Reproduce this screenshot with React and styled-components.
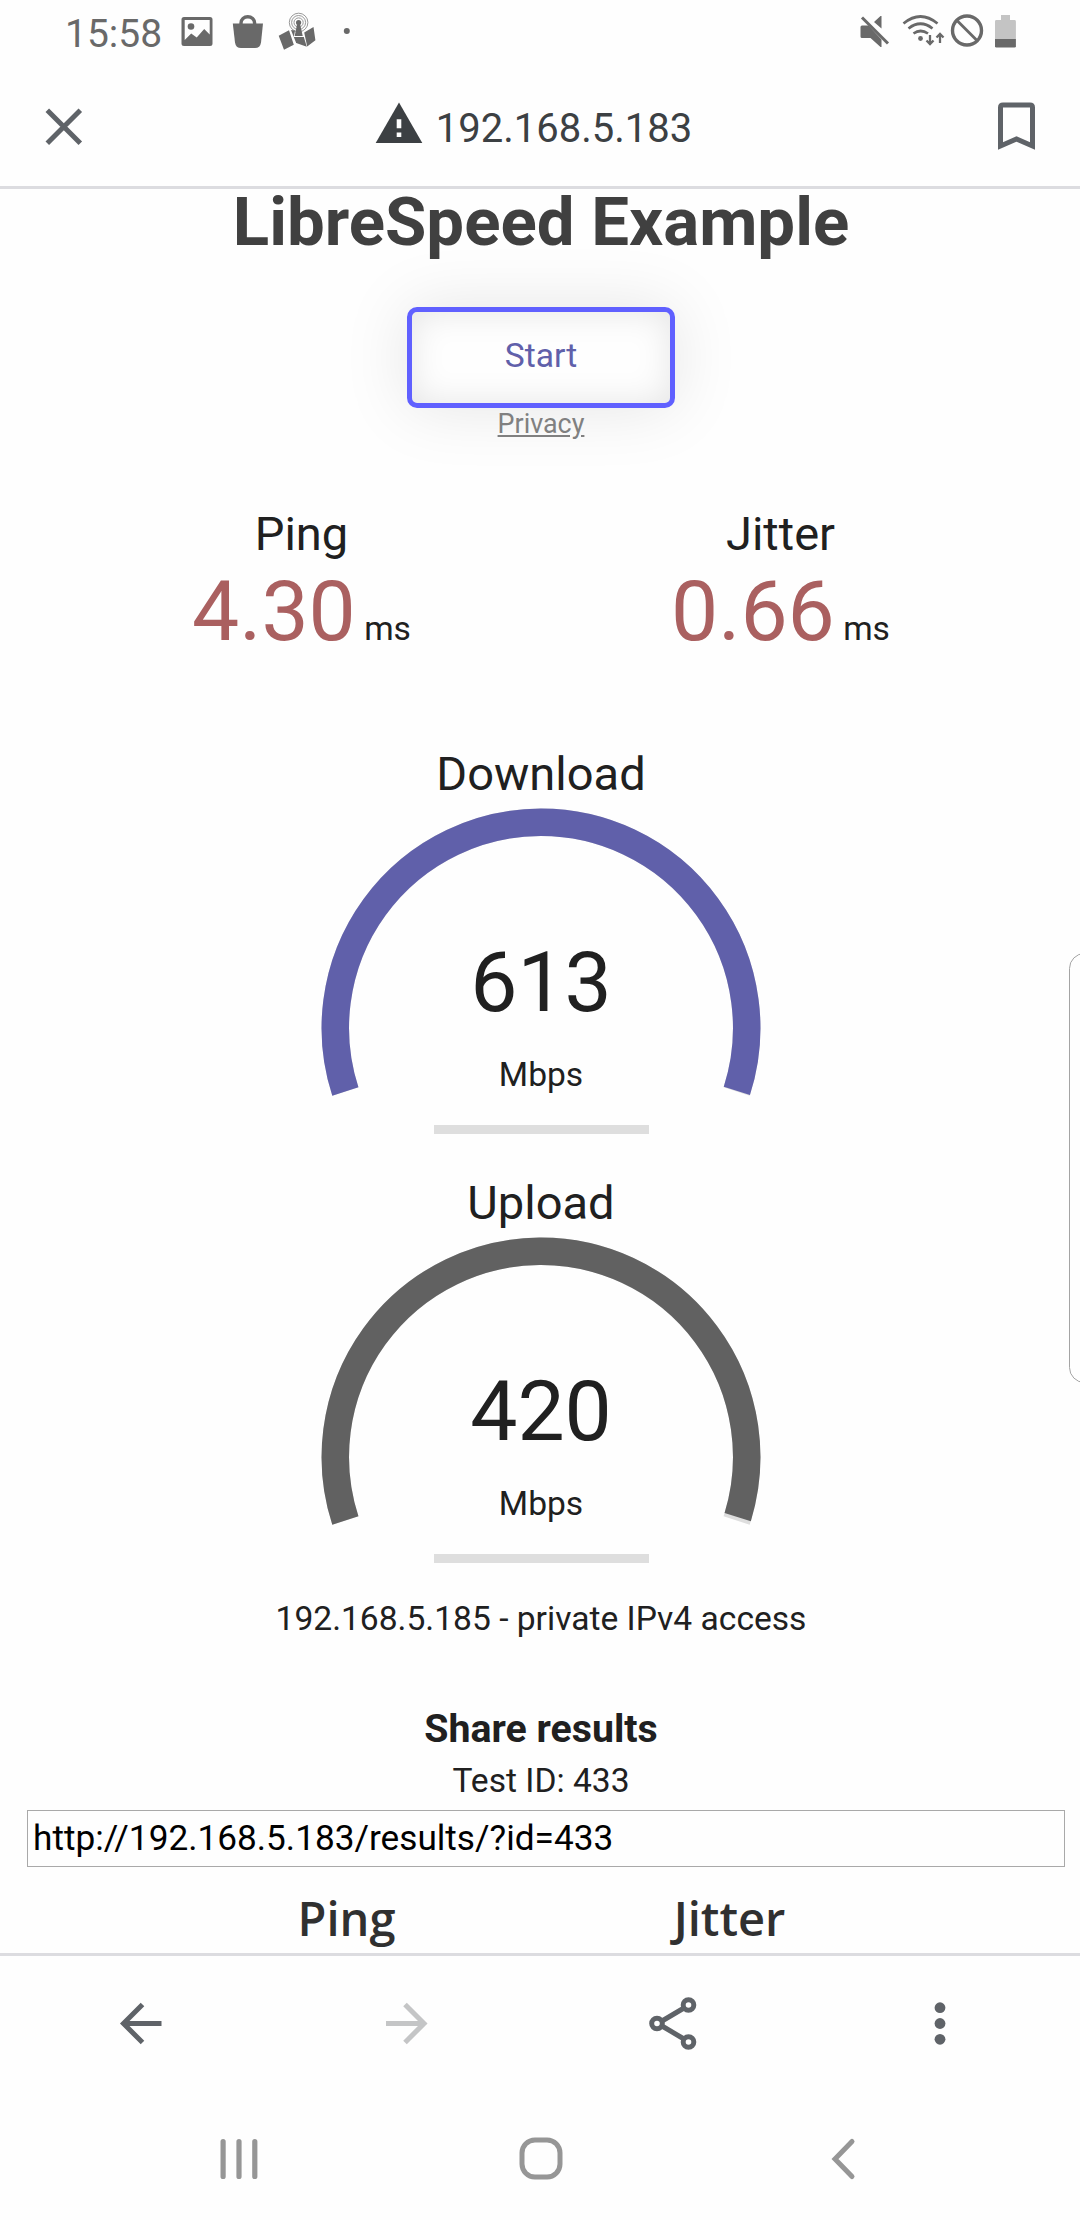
import React from 'react';
import styled, { createGlobalStyle } from 'styled-components';

const GlobalStyle = createGlobalStyle`
  * {
    box-sizing: border-box;
  }

  body {
    margin: 0;
    background: #fefefe;
    font-family: Roboto, sans-serif;
    color: #202020;
  }

  svg {
    display: block;
    flex: none;
  }
`;

const Screen = styled.div`
  position: relative;
  display: flex;
  flex-direction: column;
  width: 1080px;
  height: 2220px;
  overflow: hidden;
`;

const StatusBar = styled.header`
  display: flex;
  align-items: center;
  justify-content: space-between;
  height: 64px;
  padding: 0 63px 0 65px;
`;

const StatusGroup = styled.div`
  display: flex;
  align-items: center;
`;

const Clock = styled.span`
  width: 112px;
  font-size: 39px;
  line-height: 60px;
  padding-top: 4px;
  color: #696969;
`;

const TopBar = styled.div`
  display: flex;
  align-items: center;
  justify-content: space-between;
  height: 125px;
  padding: 0 40px;
  border-bottom: 3px solid #dcdce0;
`;

const Address = styled.div`
  display: flex;
  align-items: center;
  gap: 13px;
  margin-right: 13px;
  font-size: 40px;
  line-height: 48px;
  color: #3c4043;

  span {
    padding-top: 7px;
  }
`;

const Page = styled.main`
  display: flex;
  flex-direction: column;
  align-items: center;
  height: 1764px;
  padding-left: 2px;
  font-size: 33.6px;
  line-height: 40px;

  > * {
    flex-shrink: 0;
  }
`;

const Title = styled.h1`
  margin: 0;
  font-size: 67.2px;
  line-height: 66px;
  font-weight: 700;
  color: #404040;
`;

const StartButton = styled.button`
  width: 268px;
  height: 101px;
  margin-top: 52px;
  padding: 0 0 4px;
  border: 5px solid #6060ff;
  border-radius: 10px;
  background: transparent;
  box-shadow: 0 0 67px rgba(0, 0, 0, 0.1), inset 0 0 34px rgba(0, 0, 0, 0.1);
  font: inherit;
  color: #6060aa;
`;

const Privacy = styled.a`
  font-size: 26.88px;
  line-height: 32px;
  color: #808080;
  text-decoration: underline;
`;

const LatencyRow = styled.div`
  display: flex;
  gap: 8px;
  margin-top: 66px;
`;

const LatencyCell = styled.div`
  width: 471px;
  text-align: center;
`;

const Label = styled.div`
  font-size: 47.04px;
  line-height: 56px;
`;

const Latency = styled.div`
  margin-top: 1px;

  b {
    font-size: 84px;
    line-height: 98px;
    font-weight: 400;
    color: #aa6060;
  }
`;

const Test = styled.section`
  display: flex;
  flex-direction: column;
  align-items: center;
  margin-top: ${props => props.$gap}px;
`;

const Meter = styled.div`
  display: grid;
  justify-items: center;
  height: 332px;

  > * {
    grid-area: 1 / 1;
  }
`;

const Reading = styled.div`
  display: flex;
  flex-direction: column;
  align-items: center;
  padding-top: 132px;
`;

const Speed = styled.div`
  font-size: 84px;
  line-height: 98px;
`;

const Unit = styled.div`
  margin-top: 23px;
`;

const Progress = styled.div`
  width: 215px;
  height: 9px;
  margin-top: 30px;
  background: #dedede;
`;

const ClientIp = styled.div`
  margin-top: 36px;
`;

const ShareTitle = styled.h3`
  margin: 67px 0 9px;
  font-size: 39.3px;
  line-height: 46px;
`;

const ResultUrl = styled.input`
  align-self: stretch;
  height: 57px;
  margin: 9px 15px 0 25px;
  padding: 0 5px 2px;
  border: 1px solid #a9a9a9;
  border-radius: 0;
  background: transparent;
  font: inherit;
  font-size: 35.2px;
  color: #000;
`;

const ResultCard = styled.div`
  display: grid;
  grid-template-columns: 381px 385px;
  margin: 18px 0 0 -4px;
  text-align: center;
  font: 600 47px/66px 'Open Sans', sans-serif;
  color: #303030;
`;

const ToolBar = styled.nav`
  display: flex;
  justify-content: space-between;
  height: 141px;
  padding: 32px 104px 0;
  border-top: 3px solid #dcdce0;
`;

const SystemBar = styled.nav`
  display: flex;
  justify-content: space-between;
  padding: 35px 206px 0;
`;

const EdgePanel = styled.div`
  position: absolute;
  top: 953px;
  right: -20px;
  width: 31px;
  height: 430px;
  border: 1.500px solid #a4a4a4;
  border-radius: 16px;
`;

const point = (r, deg) => {
  const a = (deg * Math.PI) / 180;
  return `${220 + r * Math.cos(a)} ${226 + r * Math.sin(a)}`;
};

const arc = end => `M${point(205.7, -198)} A205.7 205.7 0 1 1 ${point(205.7, end)}`;

const Gauge = ({ label, value, color, end, gap }) => (
  <Test $gap={gap}>
    <Label>{label}</Label>
    <Meter>
      <svg width="440" height="332" fill="none" strokeWidth="27.5">
        <path d={arc(18)} stroke="#dedede" />
        <path d={arc(end)} stroke={color} />
      </svg>
      <Reading>
        <Speed>{value}</Speed>
        <Unit>Mbps</Unit>
        <Progress />
      </Reading>
    </Meter>
  </Test>
);

const NotificationIcons = () => (
  <svg width="180" height="64" viewBox="177 0 180 64" fill="#696969">
    <path fillRule="evenodd" d="M184 17h26q2.500 0 2.500 2.500v24q0 2.500-2.500 2.500h-26q-2.500 0-2.500-2.500v-24q0-2.500 2.500-2.500zM184.700 20v20l6.500-6.500 5.500 4 7.500-8.500 5.500 5.500V20z" />
    <circle cx="191" cy="26.500" r="3.300" />
    <path d="M232.800 23.500h30.200l-2 19q-.8 5.500-6 5.500h-14q-5.200 0-6-5.500z" />
    <path d="M241 25v-2a6.800 6.300 0 0 1 13.600 0v2" fill="none" stroke="#696969" strokeWidth="3.400" />
    <path d="M278.700 35.700l10.300-5.400 4.800 14.500-9.800 5zM291 30l4 .6-1.200 6.400h10l3 9.800-10.600-3.800zM304.200 32.500l9.300-5.500 1.900 13.200-8.200 6.300z" />
    <path d="M294.700 36l2.300-11.500h3.200l2.500 11.500z" />
    <circle cx="298.600" cy="22.500" r="2.600" />
    <g fill="none" stroke="#696969" strokeWidth="0.900" opacity="0.75">
      <circle cx="298.600" cy="22.500" r="4.600" />
      <circle cx="298.600" cy="22.500" r="7" />
      <circle cx="298.600" cy="22.500" r="9.300" />
    </g>
    <circle cx="346.800" cy="31" r="3" />
  </svg>
);

const SystemIcons = () => (
  <svg width="160" height="64" viewBox="857 0 160 64" fill="#696969">
    <path d="M874 22l6.500-6h1v12.500zM862 25.500h6.500l13 14V47h-1l-10-9H862q-1.500 0-1.500-1.500V27q0-1.500 1.500-1.500z" />
    <path d="M862 17.500l26 26" stroke="#696969" strokeWidth="3" />
    <g fill="none" stroke="#696969" strokeWidth="2.700">
      <path d="M903.500 23.500q17-14 34 0M908.500 28.500q12-9.500 24 0M913.500 33.500q7-5 14.500 0" />
      <path d="M930 35v9M926.500 40.500l3.500 3.500 3.500-3.500M940 43v-9M936.500 37.500l3.500-3.500 3.500 3.500" strokeWidth="2.300" />
    </g>
    <circle cx="920.500" cy="38.500" r="2.400" />
    <g fill="none" stroke="#696969">
      <circle cx="967" cy="30.500" r="14.500" strokeWidth="3.400" />
      <path d="M957 20.500l20 20" strokeWidth="2.800" />
    </g>
    <path d="M1001 15h9v5h4.500q1.400 0 1.400 1.400V39H995V21.400q0-1.400 1.400-1.400h4.600z" fill="#c4c4c4" />
    <path d="M995 39h20.900v7.200q0 1.400-1.400 1.400h-18.100q-1.400 0-1.400-1.400z" />
  </svg>
);

const App = () => (
  <Screen>
    <GlobalStyle />
    <StatusBar>
      <StatusGroup>
        <Clock>15:58</Clock>
        <NotificationIcons />
      </StatusGroup>
      <SystemIcons />
    </StatusBar>

    <TopBar>
      <svg width="48" height="48" stroke="#5f6368" strokeWidth="5">
        <path d="M7.300 9.200l33 33M40.300 9.200l-33 33" />
      </svg>
      <Address>
        <svg width="48" height="48">
          <path d="M24 1.500L47.300 42H.7z" fill="#3c4043" />
          <path d="M21.700 18.300h4.600v9h-4.600zM21.700 31.500h4.600v4.500h-4.600z" fill="#fefefe" />
        </svg>
        <span>192.168.5.183</span>
      </Address>
      <svg width="48" height="54" fill="none" stroke="#5f6368" strokeWidth="5">
        <path d="M8.500 48V9.500q0-2.500 2.500-2.500h27q2.500 0 2.500 2.500V48l-16-7z" />
      </svg>
    </TopBar>

    <Page>
      <Title>LibreSpeed Example</Title>
      <StartButton>Start</StartButton>
      <Privacy>Privacy</Privacy>

      <LatencyRow>
        <LatencyCell>
          <Label>Ping</Label>
          <Latency><b>4.30</b> ms</Latency>
        </LatencyCell>
        <LatencyCell>
          <Label>Jitter</Label>
          <Latency><b>0.66</b> ms</Latency>
        </LatencyCell>
      </LatencyRow>

      <Gauge label="Download" value="613" color="#6060aa" end={17.8} gap={85} />
      <Gauge label="Upload" value="420" color="#616161" end={17} gap={41} />

      <ClientIp>192.168.5.185 - private IPv4 access</ClientIp>

      <ShareTitle>Share results</ShareTitle>
      <div>Test ID: 433</div>
      <ResultUrl readOnly value="http://192.168.5.183/results/?id=433" />
      <ResultCard>
        <span>Ping</span>
        <span>Jitter</span>
      </ResultCard>
    </Page>

    <ToolBar>
      <svg width="72" height="72" fill="none" stroke="#5f6368" strokeWidth="5">
        <path d="M57.500 35.500H20M38.500 16.500l-19 19 19 19" />
      </svg>
      <svg width="72" height="72" fill="none" stroke="#c4c5c6" strokeWidth="5">
        <path d="M15 35.500h38M34 16.500l19 19-19 19" />
      </svg>
      <svg width="72" height="72" fill="none" stroke="#5f6368" strokeWidth="5">
        <circle cx="20" cy="35.500" r="5.300" />
        <circle cx="51.500" cy="17" r="5.300" />
        <circle cx="51.500" cy="54" r="5.300" />
        <path d="M25 33l22-13M25 38l22 13" />
      </svg>
      <svg width="72" height="72" fill="#5f6368">
        <circle cx="36" cy="19.700" r="5.400" />
        <circle cx="36" cy="35.500" r="5.400" />
        <circle cx="36" cy="51.300" r="5.400" />
      </svg>
    </ToolBar>

    <SystemBar>
      <svg width="64" height="64" stroke="#969696" strokeWidth="5.200" strokeLinecap="round">
        <path d="M17.100 12.500v35M33 12.500v35M48.800 12.500v35" />
      </svg>
      <svg width="64" height="64" fill="none" stroke="#969696" strokeWidth="5">
        <rect x="14" y="11" width="38" height="37" rx="13" />
      </svg>
      <svg width="64" height="64" fill="none" stroke="#969696" strokeWidth="5" strokeLinecap="round">
        <path d="M42 12.500L25 30l17 17.500" />
      </svg>
    </SystemBar>

    <EdgePanel />
  </Screen>
);

export default App;
